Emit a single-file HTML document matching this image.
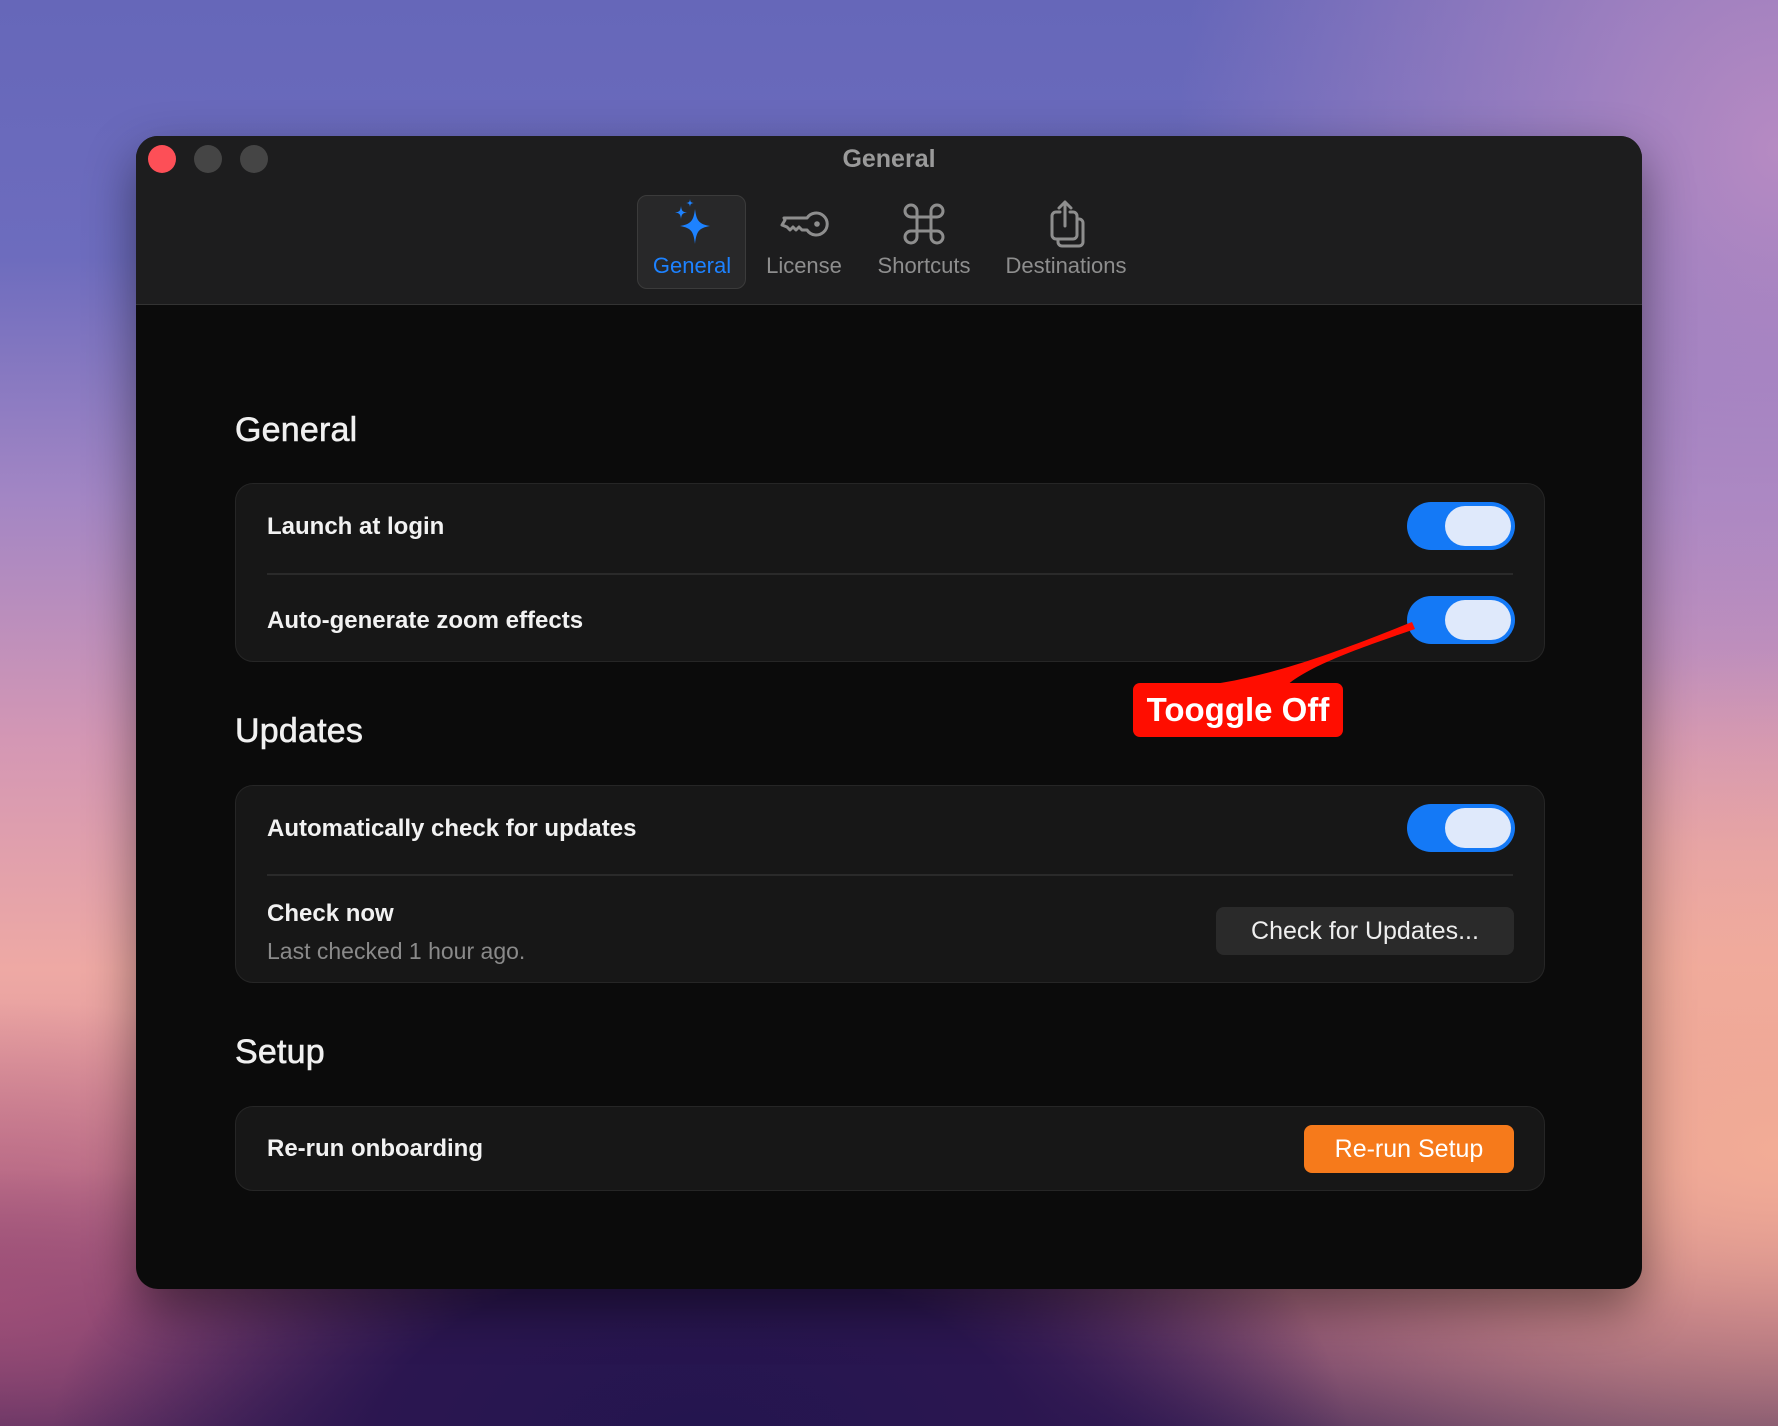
<!DOCTYPE html>
<html><head><meta charset="utf-8"><style>
*{margin:0;padding:0;box-sizing:border-box}
body{width:1778px;height:1426px;overflow:hidden;font-family:"Liberation Sans",sans-serif;position:relative;
background:
radial-gradient(ellipse 650px 380px at 700px 1450px,#23154f 0%,#2b1650 50%,rgba(60,30,80,0) 100%),
radial-gradient(ellipse 500px 300px at 0px 1300px,rgba(160,80,120,.9) 0%,rgba(160,80,120,0) 100%),
radial-gradient(ellipse 800px 500px at 1778px 1150px,rgba(242,172,150,1) 0%,rgba(242,172,150,0) 100%),
radial-gradient(ellipse 600px 700px at 1778px 150px,rgba(182,138,194,1) 0%,rgba(182,138,194,0) 100%),
linear-gradient(180deg,#6667b9 0%,#6d6cbe 18%,#a386c4 35%,#d497b4 52%,#eea9a4 68%,#d88c98 82%,#7a3f6e 92%,#3a1f55 100%);}
.win{position:absolute;left:136px;top:136px;width:1506px;height:1153px;border-radius:22px;background:#0b0b0b;overflow:hidden;box-shadow:0 20px 50px rgba(0,0,0,.45)}
.tb{position:absolute;left:0;top:0;width:100%;height:169px;background:#1d1d1e;border-bottom:1px solid #333}
.dot{position:absolute;top:9px;width:28px;height:28px;border-radius:50%;background:#454545}
.title{position:absolute;top:9px;width:100%;text-align:center;color:#9a9a9a;font-weight:bold;font-size:25px}
.tab{position:absolute;top:59px;width:124px;text-align:center;color:#8e8e8e;font-size:22px}
.tab svg{display:block;margin:0 auto 4px}
.sel{position:absolute;left:501px;top:59px;width:109px;height:94px;border-radius:10px;background:#282829;border:1.5px solid #3b3b3b}
h2{position:absolute;left:99px;color:#f0f0f0;font-size:34px;font-weight:normal;letter-spacing:.2px;-webkit-text-stroke:0.6px #f0f0f0}
.card{position:absolute;left:99px;width:1310px;background:#171717;border:1.5px solid #262626;border-radius:18px}
.lbl{position:absolute;left:31px;color:#f2f2f2;font-size:24px;font-weight:bold}
.sub{position:absolute;left:31px;color:#8a8a8a;font-size:23px}
.div{position:absolute;left:31px;right:31px;height:1.5px;background:#2a2a2a}
.tg{position:absolute;left:1171px;width:108px;height:48px;border-radius:24px;background:#1479f6}
.tg:after{content:"";position:absolute;right:4px;top:4px;width:66px;height:40px;border-radius:20px;background:#dfe9fb}
.btn{position:absolute;font-size:25px;text-align:center;border-radius:8px}
</style></head><body>
<div class="win">
 <div class="tb">
  <div class="dot" style="left:12px;background:#fd4f57;top:9px"></div>
  <div class="dot" style="left:58px"></div>
  <div class="dot" style="left:104px"></div>
  <div class="title">General</div>
  <div class="sel"></div>
  <div class="tab" style="left:494px;color:#1d82ff;top:63px">
   <svg width="48" height="50" viewBox="0 0 48 50"><path fill="#1d82ff" d="M27 10 C28.5 22 31 25 42 27 C31 29 28.5 32 27 45 C25.5 32 23 29 12 27 C23 25 25.5 22 27 10Z M13 7 C13.6 12 14.6 13 19 13.5 C14.6 14 13.6 15 13 20 C12.4 15 11.4 14 7 13.5 C11.4 13 12.4 12 13 7Z M22 0 C22.3 3 23 3.7 26 4 C23 4.3 22.3 5 22 8 C21.7 5 21 4.3 18 4 C21 3.7 21.7 3 22 0Z"/></svg>General</div>
  <div class="tab" style="left:606px;top:63px">
   <svg width="52" height="50" viewBox="0 0 52 50"><g fill="none" stroke="#8e8e8e" stroke-width="3" stroke-linejoin="round"><path d="M29 19 A11 11 0 1 1 29 31 L24 31 L21 28 L18 31 L15 28 L12 31 L9 28 L4 26 L7 21 L6 19 Z"/><circle cx="39" cy="25" r="2.8" fill="#8e8e8e" stroke="none"/></g></svg>License</div>
  <div class="tab" style="left:726px;top:63px">
   <svg width="50" height="50" viewBox="0 0 50 50"><g fill="none" stroke="#8e8e8e" stroke-width="3"><path d="M18 18 H32 V32 H18 Z M18 18 V12 A6 6 0 1 0 12 18 H18 M32 18 V12 A6 6 0 1 1 38 18 H32 M18 32 V38 A6 6 0 1 1 12 32 H18 M32 32 V38 A6 6 0 1 0 38 32 H32"/></g></svg>Shortcuts</div>
  <div class="tab" style="left:856px;width:148px;top:63px">
   <svg width="50" height="50" viewBox="0 0 50 50"><g fill="none" stroke="#8e8e8e" stroke-width="3" stroke-linejoin="round" stroke-linecap="round"><path d="M19 13 H15 A4 4 0 0 0 11 17 V36 A4 4 0 0 0 15 40 H32 A4 4 0 0 0 36 36 V17 A4 4 0 0 0 32 13 H29"/><path d="M24 27 V3 M18 9 L24 3 L30 9"/><path d="M36 20 H38 A4 4 0 0 1 42 24 V43 A4 4 0 0 1 38 47 H21 A4 4 0 0 1 17 43 V40"/></g></svg>Destinations</div>
 </div>
 <h2 style="top:275px">General</h2>
 <div class="card" style="top:347px;height:179px">
  <div class="lbl" style="top:29px">Launch at login</div>
  <div class="div" style="top:89px"></div>
  <div class="lbl" style="top:123px">Auto-generate zoom effects</div>
  <div class="tg" style="top:18px"></div>
  <div class="tg" style="top:112px"></div>
 </div>
 <h2 style="top:576px">Updates</h2>
 <div class="card" style="top:649px;height:198px">
  <div class="lbl" style="top:29px">Automatically check for updates</div>
  <div class="tg" style="top:18px"></div>
  <div class="div" style="top:88px"></div>
  <div class="lbl" style="top:114px">Check now</div>
  <div class="sub" style="top:152px">Last checked 1 hour ago.</div>
  <div class="btn" style="left:980px;top:121px;width:298px;height:48px;line-height:48px;background:#2a2a2a;color:#eee">Check for Updates...</div>
 </div>
 <h2 style="top:897px">Setup</h2>
 <div class="card" style="top:970px;height:85px">
  <div class="lbl" style="top:28px">Re-run onboarding</div>
  <div class="btn" style="left:1068px;top:18px;width:210px;height:48px;line-height:48px;background:#f67a1b;color:#fff">Re-run Setup</div>
 </div>
 <svg style="position:absolute;left:0;top:0" width="1506" height="1153"><path fill="#ff0d00" d="M1276 486 L1279 493 C1230 510 1170 530 1148 552 L1040 552 C1110 548 1180 525 1276 486 Z"/></svg>
 <div style="position:absolute;left:997px;top:547px;width:210px;height:54px;background:#ff0d00;border-radius:7px;color:#fff;font-weight:bold;font-size:33px;text-align:center;line-height:54px">Tooggle Off</div>
</div>
</body></html>
